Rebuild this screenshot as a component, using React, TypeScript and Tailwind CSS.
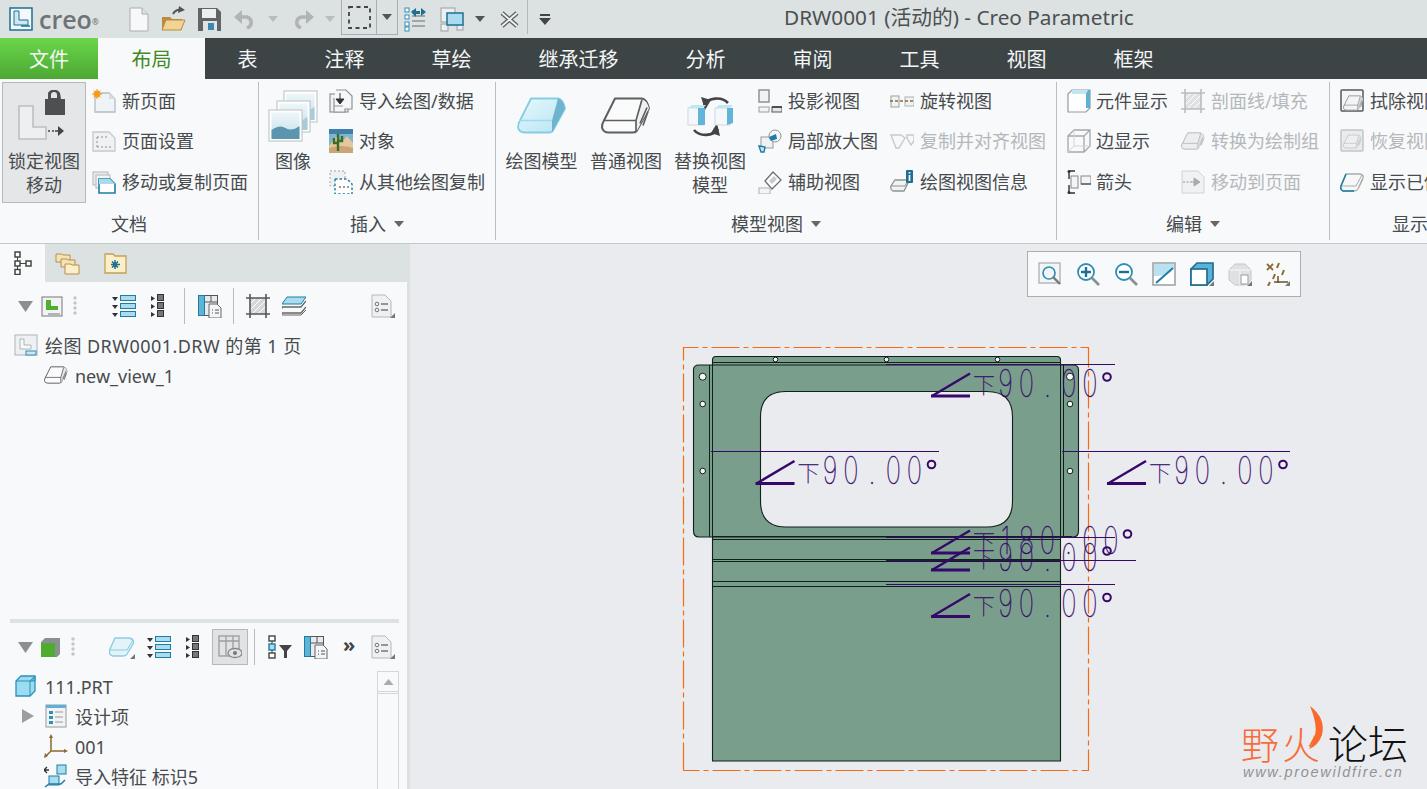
import React from "react";

type P = { w?: number; h?: number; children?: React.ReactNode };
const S = ({ w = 24, h = 24, children }: P) => (
  <svg width={w} height={h} viewBox={`0 0 ${w} ${h}`} className="block shrink-0">{children}</svg>
);
const Tri = ({ c = "#666", w = 10, h = 6 }: { c?: string; w?: number; h?: number }) => (
  <svg width={w} height={h} viewBox="0 0 10 6" preserveAspectRatio="none" className="block shrink-0"><path d="M0 0h10L5 6z" fill={c} /></svg>
);
const Corner = () => <path d="M24 19v5h-5z" fill="#777" />;

const Block = ({ w = 24, h = 18, stroke = "#5b6063", fill = "#f6f7f8", side = "#d8dadb" }: { w?: number; h?: number; stroke?: string; fill?: string; side?: string }) => (
  <svg width={w} height={h} viewBox="0 0 50 36" className="block shrink-0">
    <path d="M14 1H41Q46 2 48 11L36 33Q35 35 32 35H8Q2 35 1 30Q1 26 3 23Z" fill={fill} stroke={stroke} strokeWidth="2" strokeLinejoin="round" />
    <path d="M35 34 35 23 41 2Q46 3 48 11L36 33Z" fill={side} />
    <path d="M2 23H35L41 2M35 23 35 34M39 26 46 10M42 28 47 14" fill="none" stroke={stroke} strokeWidth="1.700" />
  </svg>
);

const ListTree = () => (
  <S w={24} h={24}>
    {[2, 10, 18].map((y) => (
      <g key={y}><path d={`M0 ${y + 1}h6l-3 4z`} fill="#333" /><rect x="8.5" y={y - 0.5} width="15" height="5" fill="#a8dcee" stroke="#1f7da5" /></g>
    ))}
  </S>
);
const DotTree = () => (
  <S w={14} h={24}>
    {[2, 10, 18].map((y) => (
      <g key={y}><path d={`M0 ${y}l4 2.5-4 2.5z`} fill="#333" /><rect x="6.5" y={y - 1.5} width="6" height="6" fill="#777" stroke="#333" /></g>
    ))}
  </S>
);
const TableDoc = () => (
  <S>
    <rect x="0.5" y="1.5" width="19" height="20" fill="#e8eaeb" stroke="#555" />
    <rect x="0.5" y="1.5" width="6" height="20" fill="#5fb3d6" stroke="#1f7da5" />
    <path d="M7 8h12M13 2v6" stroke="#555" />
    <path d="M11 10h8l4 4v10H11z" fill="#f4f5f6" stroke="#666" />
    <path d="M14 16h1m2 0h4M14 19h1m2 0h4" stroke="#555" />
  </S>
);
const Settings = () => (
  <S w={24} h={24}>
    <path d="M1 1h13l6 6v16H1z" fill="#eef0f1" stroke="#b5b9bb" />
    <circle cx="6" cy="10" r="1.8" fill="none" stroke="#777" /><circle cx="6" cy="16" r="1.8" fill="none" stroke="#777" />
    <path d="M10 10h7M10 16h7" stroke="#777" strokeWidth="1.3" />
    <Corner />
  </S>
);
const Dots = () => (
  <S w={6} h={24}>{[4, 9, 14, 19].map((y) => <circle key={y} cx="3" cy={y} r="1.7" fill="#c4c7c9" />)}</S>
);
const Hatch = ({ c = "#555", bg = "#d5d7d8" }: { c?: string; bg?: string }) => (
  <S>
    <rect x="4" y="4" width="16" height="16" fill={bg} />
    <path d="M4 10l6-6M4 16 16 4M6 20 20 6M12 20l8-8" stroke="#fff" strokeWidth="1" />
    <path d="M0 4h24M0 20h24M4 0v24M20 0v24" stroke={c} strokeWidth="1.6" />
  </S>
);

/* ribbon icons */
const NewPage = () => (
  <S><path d="M3 4h14l6 6v13H3z" fill="#eef3f6" stroke="#b6bcbf" strokeWidth="1.3" /><path d="M17 4v6h6" fill="#d8dcde" /><circle cx="5" cy="5" r="3.4" fill="#f7a51e" /><path d="M5 0v10M0 5h10M1.500 1.500l7 7M8.500 1.500l-7 7" stroke="#f2971a" strokeWidth="1" /></S>
);
const PageSetup = () => (
  <S><path d="M1 3h16l6 6v13H1z" fill="#eff1f2" stroke="#c5c9cb" strokeWidth="1.3" /><path d="M5 18h16M5 8v10M5 8h11" stroke="#8c9194" strokeDasharray="2 2" fill="none" /></S>
);
const MovePage = () => (
  <S><rect x="1" y="2" width="15" height="13" fill="#e8eaec" stroke="#b4b8ba" /><rect x="4" y="5" width="14" height="13" fill="#f3f4f5" stroke="#b4b8ba" /><path d="M7 9h11l5 5v9H7z" fill="#fff" stroke="#1f7da5" strokeWidth="1.6" /><path d="M7 9h11l5 5H7z" fill="#a8dcee" /></S>
);
const Lock = () => (
  <svg width="52" height="56" viewBox="0 0 52 56" className="block">
    <path d="M1 16H15V37H28V49H1Z" fill="#edeff0" stroke="#bcc0c2" strokeWidth="1.6" />
    <path d="M30 3a7 7 0 0 1 12 0l1 6h4v16H27V9h3z" fill="#4d4f50" />
    <path d="M33 8V5a3 3 0 0 1 6 0v3z" fill="#e4e6e7" />
    <path d="M30 41h2M34 41h2M37 41h3" stroke="#444" strokeWidth="1.300" />
    <path d="M40 36l6 5-6 5z" fill="#444" />
  </svg>
);
const ImgCard = ({ x, y, hill = "#a9cbd9" }: { x: number; y: number; hill?: string }) => (
  <g>
    <rect x={x} y={y} width="33" height="31" fill="#fff" stroke="#c5c9cb" strokeWidth="1.2" />
    <rect x={x + 2.500} y={y + 2.500} width="28" height="26" fill="url(#sky)" />
    <path d={`M${x + 2.500} ${y + 20}q8-6 14-2t14-2v13h-28z`} fill={hill} />
  </g>
);
const Images = () => (
  <svg width="50" height="52" viewBox="0 0 50 52" className="block">
    <defs><linearGradient id="sky" x1="0" y1="0" x2="0" y2="1"><stop offset="0" stopColor="#eef6f9" /><stop offset="1" stopColor="#c4e0ea" /></linearGradient></defs>
    <ImgCard x={16} y={1} /><ImgCard x={9} y={11} /><ImgCard x={1} y={20} hill="#5b95af" />
  </svg>
);
const ImportDraw = () => (
  <S><rect x="1" y="5" width="18" height="18" fill="#f1f3f4" stroke="#8f9496" strokeWidth="1.2" /><path d="M7 1h10l6 6v13H16v3H5V9" fill="#f6f7f8" stroke="#8f9496" strokeWidth="1.2" /><path d="M11 4v9M7 10l4 5 4-5z" fill="#333" stroke="#333" /><path d="M5 17h9" stroke="#999" /></S>
);
const Cactus = () => (
  <S>
    <rect width="24" height="24" fill="#7fb4cf" /><rect y="0" width="24" height="5" fill="#3f7fa8" />
    <path d="M0 17 7 8l6 5 5-6 6 7v10H0z" fill="#e4c79d" /><path d="M0 19q12-4 24 0v5H0z" fill="#c9a673" />
    <path d="M9 22V5M9 14H5v-5M9 12h4V7" stroke="#3d6b2a" strokeWidth="2.400" fill="none" />
  </S>
);
const CopyDraw = () => (
  <S>
    <rect x="1" y="1" width="15" height="15" fill="#eef0f1" stroke="#a0a5a8" strokeDasharray="2 2" />
    <path d="M6 9h12l5 5v10H6z" fill="#fff" stroke="#1f7da5" strokeWidth="1.400" strokeDasharray="2.500 2" />
    <path d="M10 17h10" stroke="#333" strokeDasharray="2 2" />
  </S>
);
const DrawModel = () => (
  <svg width="50" height="37" viewBox="0 0 50 36" className="block">
    <defs><linearGradient id="bl" x1="0" y1="0" x2="1" y2="1"><stop offset="0" stopColor="#e9f8fc" /><stop offset="1" stopColor="#b5e4f2" /></linearGradient></defs>
    <path d="M14 1H41Q46 2 48 11L36 33Q35 35 32 35H8Q2 35 1 30Q1 26 3 23Z" fill="url(#bl)" stroke="#86cde3" strokeWidth="1.800" strokeLinejoin="round" />
    <path d="M35 35 35 23 41 1Q46 2 48 11L36 33Z" fill="#6eb4cf" />
    <path d="M2 23H35" stroke="#9bdcee" strokeWidth="1.500" />
  </svg>
);
const Replace = () => (
  <svg width="47" height="48" viewBox="0 0 47 48" className="block">
    <path d="M17 13a14 11 0 0 1 24 -2" fill="none" stroke="#444" strokeWidth="2.600" />
    <path d="M14 5 18 18 24 8z" fill="#444" />
    <path d="M31 37a14 11 0 0 1-24 1" fill="none" stroke="#444" strokeWidth="2.600" />
    <path d="M33 44 30 31 24 41z" fill="#444" />
    <rect x="1" y="16" width="15" height="17" fill="#f4f8fa" stroke="#d2d8db" /><path d="M11 16h7v17h-7z" fill="#62b5d6" /><path d="M1 16h15l3-3H5z" fill="#bfe6f3" />
    <rect x="28" y="16" width="15" height="17" fill="#f4f8fa" stroke="#d2d8db" /><path d="M40 16h6v15l-6 2z" fill="#62b5d6" /><path d="M28 16h15l3-3H32z" fill="#bfe6f3" />
  </svg>
);
const Proj = () => (
  <S><rect x="1" y="1" width="10" height="12" fill="#f0f2f3" stroke="#7e8487" strokeWidth="1.300" /><rect x="1" y="18" width="10" height="5" fill="#f3f4f5" stroke="#9ba0a3" /><rect x="14" y="18" width="10" height="5" fill="#e4e6e7" stroke="#555" /><path d="M14 18h10" stroke="#333" strokeWidth="1.500" /></S>
);
const Detail = () => (
  <S><rect x="3" y="8" width="12" height="11" fill="#f0f1f2" stroke="#999" /><circle cx="17" cy="7" r="6" fill="#f4f5f6" stroke="#8f9496" /><path d="M11 8l7-3 1 5-6 2z" fill="#1f7da5" /><path d="M1 17l6 1 -1 5-3 0z" fill="#c9e6f2" stroke="#1f7da5" strokeWidth="1.400" /></S>
);
const Aux = () => (
  <S><path d="M7 11 15 2l8 8-9 9z" fill="#fff" stroke="#6c7174" strokeWidth="1.300" /><path d="M11 11l5-5 3 3-5 5z" fill="#c9ccce" /><rect x="1" y="18" width="11" height="6" fill="#f3f4f5" stroke="#aeb2b4" /></S>
);
const Rotate = () => (
  <S h={14}><rect x="1" y="2" width="8" height="11" fill="#f1f2f3" stroke="#9ba0a3" /><rect x="15" y="3" width="9" height="9" fill="#f1f2f3" stroke="#aeb2b4" /><path d="M0 7h24" stroke="#8a6a30" strokeWidth="1.300" strokeDasharray="3 2" /></S>
);
const CopyAlign = () => (
  <S h={16}><path d="M1 2h10l4 3-6 10H6z" fill="#f7f8f9" stroke="#c6cacc" strokeWidth="1.400" /><path d="M17 2h7v6l-3 4-4-7z" fill="#f7f8f9" stroke="#c6cacc" strokeWidth="1.400" /></S>
);
const ViewInfo = () => (
  <S><path d="M5 10h13v3l-4 8H3q-3-1-2-5z" fill="#f0f2f3" stroke="#8f9496" strokeWidth="1.300" /><path d="M1 16h14l3-6" fill="none" stroke="#8f9496" /><rect x="16" y="0" width="7" height="13" rx="1" fill="#1f6f92" /><path d="M19.500 2v1.500M19.500 5v6" stroke="#fff" strokeWidth="1.700" /></S>
);
const CompDisp = () => (
  <S><path d="M1 5 5 1h18v18l-4 4H1z" fill="#fff" stroke="#999" strokeWidth="1.200" /><path d="M5 1h18v18h-4V5H5z" fill="#5db1d4" /><path d="M5 5h14v14H5z" fill="#fff" /><path d="M5 1h16l-2 4H5z" fill="#bfe6f3" /></S>
);
const EdgeDisp = () => (
  <S><path d="M1 7 7 1h16v16l-6 6H1zM1 7h16v16M17 7l6-6" fill="#f8f9fa" stroke="#a3a8ab" strokeWidth="1.300" /><path d="M1 23l6-6h16M7 1v16" fill="none" stroke="#d2d5d7" /></S>
);
const Arrows = () => (
  <S><path d="M2 1h6M2 1v8M2 15v8M2 23h6" stroke="#333" strokeWidth="1.400" fill="none" /><circle cx="2" cy="1.500" r="1.500" fill="#333" /><circle cx="2" cy="22.500" r="1.500" fill="#333" /><rect x="4" y="6" width="7" height="12" fill="#f3f4f5" stroke="#888" /><rect x="14" y="6" width="10" height="8" fill="#f3f4f5" stroke="#888" /><path d="M14 14h10" stroke="#333" /></S>
);
const MoveTo = () => (
  <S><path d="M1 1h16l6 6v16H1z" fill="#eff1f2" stroke="#d0d3d5" /><path d="M2 12h10" stroke="#b0b4b6" strokeDasharray="2 1.500" strokeWidth="1.500" /><path d="M11 12h6M13 8l6 4-6 4z" fill="#a8acae" stroke="#a8acae" /></S>
);
const Erase = () => (
  <S><rect x="1" y="1" width="22" height="21" rx="1" fill="#f4f5f6" stroke="#55595c" strokeWidth="1.500" /><foreignObject x="3" y="6" width="21" height="17"><Block w={21} h={16} stroke="#8b8f92" fill="#f3f4f5" /></foreignObject></S>
);
const Restore = () => (
  <S><rect x="1" y="1" width="22" height="21" rx="1" fill="#e9ebec" stroke="#c2c6c8" strokeWidth="1.500" /><foreignObject x="3" y="5" width="20" height="16" opacity=".55"><Block w={19} h={15} stroke="#9a9ea1" fill="#f3f4f5" /></foreignObject></S>
);
const ShowMod = () => (
  <S h={20}><path d="M6 2H20Q24 3 23 6L18 17Q17 19 14 19H3Q0 18 1 14Z" fill="#f6f7f8" stroke="#a8acae" strokeWidth="1.300" /><path d="M6 2 1 14Q0 18 3 19H14" fill="none" stroke="#1f7da5" strokeWidth="1.500" /><path d="M2 14H16L22 3M19 15 23 7" fill="none" stroke="#a8acae" /></S>
);

const Row = ({ icon, label, off, gap = "gap-[6px]" }: { icon: React.ReactNode; label: string; off?: boolean; gap?: string }) => (
  <div className={`flex h-[40.5px] items-center whitespace-nowrap pb-[3px] ${gap} ${off ? "text-[#b4b8ba]" : ""}`}>
    <div className="flex w-[24px] justify-center">{icon}</div>
    <span>{label}</span>
  </div>
);
const Big = ({ icon, lines, w }: { icon: React.ReactNode; lines: string[]; w: string }) => (
  <div className={`flex flex-col items-center ${w}`}>
    <div className="flex h-[67px] items-center justify-center">{icon}</div>
    {lines.map((l) => <div key={l} className="whitespace-nowrap leading-[24px]">{l}</div>)}
  </div>
);
const Section = ({ w, label, arrow, children }: { w: string; label: string; arrow?: boolean; children: React.ReactNode }) => (
  <section className={`flex h-[158px] shrink-0 flex-col border-r border-[#b9bfc2] ${w}`}>
    <div className="flex h-[125px] items-start">{children}</div>
    <div className="flex h-[33px] items-center justify-center gap-[8px] whitespace-nowrap">
      <span>{label}</span>{arrow && <Tri />}
    </div>
  </section>
);

const tabs = ["表", "注释", "草绘", "继承迁移", "分析", "审阅", "工具", "视图", "框架"];

/* ---- drawing ---- */
const PURPLE = "#36086a";
const Dim = ({ dx, dy, one }: { dx: number; dy: number; one?: boolean }) => {
  const sx = 0.68;
  const chars = one ? "180.00" : "90.00";
  const pos = one ? [1005.5, 1026.5, 1047.5, 1068.5, 1090, 1111] : [1005.5, 1026.5, 1047.5, 1069, 1090];
  return (
    <g transform={`translate(${dx} ${dy})`} fill={PURPLE}>
      <path d="M931 396H970" stroke={PURPLE} strokeWidth="3" />
      <path d="M932 396 970 373.500" stroke={PURPLE} strokeWidth="2.400" />
      <text x={984} y={393} textAnchor="middle" fontSize="22" fontWeight="100" stroke={PURPLE} strokeWidth="0.25" fontFamily="'Noto Sans CJK SC',sans-serif">下</text>
      <g transform={`scale(${sx} 1)`}>
        <text x={pos.map((p) => p / sx).join(" ")} y={397} textAnchor="middle" fontSize="38" fontWeight="100" stroke={PURPLE} strokeWidth="0.45" fontFamily="Inter,sans-serif">{chars}</text>
      </g>
      <circle cx={one ? 1127.5 : 1107} cy={377} r={3.8} fill="none" stroke={PURPLE} strokeWidth="2" />
    </g>
  );
};

const Drawing = () => (
  <svg viewBox="410 244 1017 545" width="1017" height="545" className="block">
    <path d="M683.500 770.500V347.500H1088.500V770.500H683.500" fill="none" stroke="#fb6a12" strokeWidth="1.200" strokeDasharray="28 4 5 4" />
    <g stroke="#10201a" strokeWidth="1.100" fill="#7a9e8c">
      <path d="M712.500 761V360Q712.500 356.500 716 356.500H1057Q1060.500 356.500 1060.500 360V761Z" />
      <path d="M699 365H1073Q1078.500 365 1078.500 370V531Q1078.500 537 1073 537H699Q693.500 537 693.500 531V370Q693.500 365 699 365Z" />
      <path d="M786 391.500H987Q1012.500 391.500 1012.500 417V501Q1012.500 527 987 527H786Q760.500 527 760.500 501V417Q760.500 391.500 786 391.500Z" fill="#e9ebef" />
    </g>
    <g stroke="#10201a" strokeWidth="1" fill="none" shapeRendering="crispEdges">
      <path d="M709.500 365V537M712.500 365V537M1060.500 365V537M1063.500 365V537M712.500 362.500H1060.500M712.500 536.500H1072M712.500 539.500H1060.500M712.500 559.500H1060.500M712.500 561.500H1060.500M712.500 581.500H1060.500M712.500 586.500H1060.500" />
    </g>
    <g fill="#f4f5f6" stroke="#10201a" strokeWidth="1">
      {[[702.7, 376.7, 3.500], [702.7, 404, 2.800], [702.7, 471, 2.800], [1070, 376.7, 3.500], [1070, 404, 2.800], [1070, 471, 2.800], [775.5, 359.5, 2.300], [886.5, 359.5, 2.300], [997.5, 359.5, 2.300]].map(([x, y, r]) => (
        <circle key={`${x}${y}`} cx={x} cy={y} r={r} />
      ))}
    </g>
    <g stroke={PURPLE} strokeWidth="1" shapeRendering="crispEdges">
      <path d="M886 364.500H1115M711 451.500H939M1062 451.500H1290M886 537.500H1115M886 560.500H1136M886 584.500H1115" />
    </g>
    <Dim dx={0} dy={0} />
    <Dim dx={-175.5} dy={87.500} />
    <Dim dx={176} dy={87.500} />
    <Dim dx={0} dy={157} one />
    <Dim dx={0} dy={174} />
    <Dim dx={0} dy={220.500} />
    <g fontFamily="'Noto Sans CJK SC',sans-serif" fontSize="38" fontWeight="300">
      <text x="1241" y="759" fill="#fa6b3a">野</text>
      <text x="1282" y="759" fill="#fa6b3a">火</text>
      <text x="1328" y="759" fontSize="40" fill="#111">论坛</text>
    </g>
    <path d="M1310 706Q1326 718 1322 735Q1318 746 1309 749Q1318 735 1315 722Q1313 713 1310 706Z" fill="#fb6a2c" />
    <text x="1243" y="777" fontFamily="'Liberation Sans',sans-serif" fontStyle="italic" fontSize="14.500" letterSpacing="1.700" fill="#8f9395">www.proewildfire.cn</text>
  </svg>
);

export default function App() {
  return (
    <div className="relative flex h-[789px] w-[1427px] flex-col overflow-hidden bg-[#e9ebef] font-['Noto_Sans','Noto_Sans_CJK_SC',sans-serif] text-[18px] leading-[24px] text-[#484b4d]">
      {/* title bar */}
      <header className="flex h-[38px] shrink-0 items-center bg-[#dce1e1]">
        <div className="ml-[9px]">
          <S h={24}><rect x="1" y="1" width="22" height="22" fill="#f4f8fa" stroke="#1f6f92" strokeWidth="1.500" /><path d="M5 4h5v9h9v5H5z" fill="#cfe7f1" stroke="#1f6f92" /><path d="M12 19h9" stroke="#1f6f92" strokeWidth="1.500" /></S>
        </div>
        <span className="ml-[6px] w-[61px] shrink-0 whitespace-nowrap font-['Open_Sans',sans-serif] text-[25px] font-semibold leading-[30px] text-[#6f7376]">creo<sup className="text-[8px]">®</sup></span>
        <div className="ml-[29px]"><S w={20} h={25}><path d="M1 1h12l6 6v17H1z" fill="#f6f8f9" stroke="#a8aeb1" /><path d="M13 1v6h6" fill="#dfe3e5" stroke="#a8aeb1" /></S></div>
        <div className="ml-[12px]"><S w={25} h={26}><path d="M1 11h8l2 2h10v11H1z" fill="#b98c3f" /><path d="M1 24 5 14h19l-4 10z" fill="#f0d494" stroke="#b98c3f" /><path d="M12 8q3-5 8-4" stroke="#555" strokeWidth="2" fill="none" /><path d="M18 0l6 4-7 3z" fill="#555" /></S></div>
        <div className="ml-[12px]"><S w={23} h={25}><path d="M0 1h19l4 4v19H0z" fill="#5f6466" /><rect x="4" y="2" width="14" height="9" fill="#eceeef" /><rect x="5" y="14" width="14" height="10" fill="#dfe3e5" /><rect x="10" y="16" width="6" height="7" fill="#3a89ad" /></S></div>
        <div className="ml-[13px]"><S w={23} h={20}><path d="M3 8H13a7 6 0 0 1 0 11" fill="none" stroke="#b0b4b6" strokeWidth="3.600" /><path d="M8 1v14L0 8z" fill="#b0b4b6" /></S></div>
        <div className="ml-[11px]"><Tri c="#b9bdbf" /></div>
        <div className="ml-[13px]"><S w={23} h={20}><path d="M20 8H10a7 6 0 0 0 0 11" fill="none" stroke="#b0b4b6" strokeWidth="3.600" /><path d="M15 1v14l8-7z" fill="#b0b4b6" /></S></div>
        <div className="ml-[11px]"><Tri c="#b9bdbf" /></div>
        <div className="ml-[6px] flex h-[35px] w-[57px] shrink-0 self-start border-x border-b border-[#a9aeb0]">
          <div className="flex w-[35px] items-center justify-center border-r border-[#a9aeb0]"><svg width="23" height="23" viewBox="0 0 23 23"><rect x="1" y="1" width="21" height="21" fill="none" stroke="#444" strokeWidth="1.800" strokeDasharray="4 3.500" /></svg></div>
          <div className="flex flex-1 items-center justify-center"><Tri c="#555" /></div>
        </div>
        <div className="ml-[6px]"><S w={23} h={25}><path d="M8 4h4M8 9h13M8 14h13M8 19h13" stroke="#8d9295" strokeWidth="1.300" /><g fill="#fff" stroke="#2f8fb5"><rect x="1" y="1" width="4" height="4" /><rect x="1" y="8" width="4" height="4" /><rect x="1" y="15" width="4" height="4" /><rect x="1" y="20" width="4" height="4" /></g><path d="M7 5l5-4v3h4v3h-4v3zM22 5l-5-4v8z" fill="#1f6f92" /></S></div>
        <div className="ml-[13px]"><S w={24} h={25}><rect x="1" y="1" width="14" height="14" fill="#eceeef" stroke="#9a9fa2" /><rect x="1" y="17" width="7" height="7" fill="#eceeef" stroke="#9a9fa2" /><rect x="17" y="17" width="6" height="6" fill="#eceeef" stroke="#9a9fa2" /><rect x="7" y="6" width="16" height="12" fill="#a8dcee" stroke="#1f6f92" strokeWidth="1.500" /></S></div>
        <div className="ml-[11px]"><Tri c="#555" /></div>
        <div className="ml-[15px]"><S w={19} h={17}><path d="M2 2l15 13M17 2 2 15" stroke="#5f6466" strokeWidth="4.500" /><path d="M2 2l15 13M17 2 2 15" stroke="#f0f1f2" strokeWidth="1.800" /></S></div>
        <div className="ml-[8px] h-[34px] w-px self-start bg-[#b3b8ba]" />
        <div className="ml-[11px] flex flex-col items-center gap-[2px]"><div className="h-[2px] w-[10px] bg-[#444]" /><Tri c="#444" w={12} h={7} /></div>
        <span className="ml-[233px] whitespace-nowrap pb-[4px] text-[20.750px] text-[#4c5052]">DRW0001 (活动的) - Creo Parametric</span>
      </header>

      {/* tabs */}
      <nav className="flex h-[41px] shrink-0 items-center bg-[#3c4446] text-[20px] text-[#f4f5f5]">
        <div className="flex h-full w-[98px] items-center justify-center bg-gradient-to-b from-[#6ad64b] to-[#4ca832] pt-[2px]">文件</div>
        <div className="flex h-full w-[107px] items-center justify-center bg-[#f7f9fb] pt-[2px] text-[#3f8a22]">布局</div>
        <div className="-ml-[1px] flex h-full items-center pt-[2px]">
          {tabs.map((t) => <div key={t} className="whitespace-nowrap px-[33.500px]">{t}</div>)}
        </div>
      </nav>

      {/* ribbon */}
      <div className="flex h-[165px] shrink-0 overflow-hidden border-b border-[#c3c8ca] bg-[#f7f9fb] pt-[3px]">
        <Section w="w-[259px]" label="文档">
          <div className="ml-[2px] flex h-[121px] w-[84px] flex-col items-center border border-[#b4b9bb] bg-[#e4e6e7]">
            <div className="flex h-[66px] w-full items-center justify-center pt-[4px]"><Lock /></div>
            <div className="leading-[24px]">锁定视图</div>
            <div className="leading-[24px]">移动</div>
          </div>
          <div className="ml-[6px]">
            <Row gap="gap-[6px]" icon={<NewPage />} label="新页面" />
            <Row icon={<PageSetup />} label="页面设置" />
            <Row icon={<MovePage />} label="移动或复制页面" />
          </div>
        </Section>
        <Section w="w-[237px]" label="插入" arrow>
          <Big w="w-[68px]" icon={<Images />} lines={["图像"]} />
          <div className="ml-[2px]">
            <Row icon={<ImportDraw />} label="导入绘图/数据" />
            <Row icon={<Cactus />} label="对象" />
            <Row icon={<CopyDraw />} label="从其他绘图复制" />
          </div>
        </Section>
        <Section w="w-[561px]" label="模型视图" arrow>
          <div className="ml-[3px] flex">
            <Big w="w-[85px]" icon={<DrawModel />} lines={["绘图模型"]} />
            <Big w="w-[84px]" icon={<Block w={50} h={37} stroke="#5b6063" fill="#fbfbfc" side="#f0f1f2" />} lines={["普通视图"]} />
            <Big w="w-[84px]" icon={<Replace />} lines={["替换视图", "模型"]} />
          </div>
          <div className="ml-[6px] w-[132px]">
            <Row icon={<Proj />} label="投影视图" />
            <Row icon={<Detail />} label="局部放大图" />
            <Row icon={<Aux />} label="辅助视图" />
          </div>
          <div>
            <Row icon={<Rotate />} label="旋转视图" />
            <Row off icon={<CopyAlign />} label="复制并对齐视图" />
            <Row icon={<ViewInfo />} label="绘图视图信息" />
          </div>
        </Section>
        <Section w="w-[273px]" label="编辑" arrow>
          <div className="ml-[10px] w-[114px]">
            <Row gap="gap-[5px]" icon={<CompDisp />} label="元件显示" />
            <Row gap="gap-[5px]" icon={<EdgeDisp />} label="边显示" />
            <Row gap="gap-[5px]" icon={<Arrows />} label="箭头" />
          </div>
          <div>
            <Row off icon={<Hatch c="#b9bdbf" bg="#dfe1e2" />} label="剖面线/填充" />
            <Row off icon={<Block w={24} h={18} stroke="#b4b8ba" fill="#eceeef" side="#dfe1e2" />} label="转换为绘制组" />
            <Row off icon={<MoveTo />} label="移动到页面" />
          </div>
        </Section>
        <Section w="w-[178px] border-r-0" label="显示" arrow>
          <div className="ml-[10px]">
            <Row icon={<Erase />} label="拭除视图" />
            <Row off icon={<Restore />} label="恢复视图" />
            <Row icon={<ShowMod />} label="显示已修改视图" />
          </div>
        </Section>
      </div>

      {/* body */}
      <div className="flex min-h-0 flex-1">
        <aside className="flex w-[407px] shrink-0 flex-col overflow-hidden bg-[#f7f9fb]">
          <div className="flex h-[38px] shrink-0 items-center bg-[#dce1e1]">
            <div className="flex h-full w-[45px] items-center justify-center bg-[#f7f9fb]">
              <svg width="18" height="24" viewBox="0 0 18 24"><g fill="#fff" stroke="#444" strokeWidth="1.500"><rect x="1" y="1" width="5" height="5" /><rect x="1" y="10" width="5" height="5" /><rect x="1" y="18.500" width="5" height="5" /><rect x="12" y="10" width="5" height="5" /></g><path d="M3.500 6v4M3.500 15v4M6 12.500h6" stroke="#444" /></svg>
            </div>
            <div className="ml-[10px]"><svg width="25" height="24" viewBox="0 0 25 24"><g fill="#f6e3b5" stroke="#b58f4b"><path d="M1 3h6l1 1h7v7H1z" /><path d="M6 8h6l1 1h7v7H6z" /><path d="M10 13h6l1 1h7v9H10z" fill="#fbeecb" /></g></svg></div>
            <div className="ml-[24px]"><svg width="23" height="22" viewBox="0 0 23 22"><path d="M1 4V2h8l2 2h11v17H1z" fill="#fbefc9" stroke="#c39f5c" strokeWidth="1.300" /><path d="M11 8v9M7 12.500h9M8 9.500l6 6M14 9.500l-6 6" stroke="#1f6f92" strokeWidth="1.500" /></svg></div>
          </div>
          <div className="flex h-[48px] shrink-0 items-center">
            <div className="ml-[18px]"><Tri c="#8b8f92" w={15} h={11} /></div>
            <div className="ml-[8px]"><S w={22} h={24}><rect x="1" y="3" width="20" height="19" fill="#f2f3f4" stroke="#777" /><path d="M5 6h5v6h7v4H5z" fill="#4caf2f" /><path d="M7 20h12" stroke="#777" /></S></div>
            <div className="ml-[9px]"><Dots /></div>
            <div className="ml-[34px]"><ListTree /></div>
            <div className="ml-[15px]"><DotTree /></div>
            <div className="ml-[19px] h-[36px] w-px bg-[#b8bcbf]" />
            <div className="ml-[13px]"><TableDoc /></div>
            <div className="ml-[11px] h-[36px] w-px bg-[#b8bcbf]" />
            <div className="ml-[12px]"><Hatch /></div>
            <div className="ml-[12px]"><S><path d="M5 3h19l-5 7H0z" fill="#a8dcee" stroke="#1f7da5" /><path d="M0 13h19l5-6M0 19h19l5-6" fill="none" stroke="#666" strokeWidth="1.300" /><path d="M0 13v2M0 19v2h19l5-5" fill="none" stroke="#666" /></S></div>
            <div className="ml-[65px]"><Settings /></div>
          </div>
          <div className="flex h-[30px] shrink-0 items-center pl-[14px] whitespace-nowrap">
            <S w={24} h={24}><rect x="1" y="2" width="22" height="20" fill="#eef1f3" stroke="#aeb4b7" /><path d="M6 6h4v6h7v4H6z" fill="#f8f9fa" stroke="#aeb4b7" /><rect x="12" y="18" width="10" height="4" fill="#cde6f1" stroke="#2f8fb5" /></S>
            <span className="ml-[7px] pt-[2px] tracking-[0.45px]">绘图 DRW0001.DRW 的第 1 页</span>
          </div>
          <div className="flex h-[30px] shrink-0 items-center pl-[44px]">
            <Block w={24} h={18} stroke="#5b6063" fill="#fbfbfc" side="#e4e5e6" />
            <span className="ml-[7px] pt-[2px]">new_view_1</span>
          </div>
          <div className="h-[229px] shrink-0" />
          <div className="mx-[10px] h-[4px] w-[389px] shrink-0 bg-[#dce1e1]" />
          <div className="flex h-[48px] shrink-0 items-center">
            <div className="ml-[18px]"><Tri c="#8b8f92" w={15} h={11} /></div>
            <div className="ml-[8px]"><S w={19} h={22}><path d="M0 6l4-4h15v16l-3 3H0z" fill="#8b8f92" /><rect x="0" y="7" width="14" height="14" fill="#4ead2e" /></S></div>
            <div className="ml-[10px]"><Dots /></div>
            <div className="ml-[33px]"><S w={26} h={24}><path d="M6 3H20Q26 4 24 9L18 19Q17 21 14 21H4Q-1 20 1 14Z" fill="#e2f3f9" stroke="#8ccde3" strokeWidth="1.400" /><path d="M1 15H18L24 5" fill="none" stroke="#8ccde3" /><path d="M26 19v5h-5z" fill="#777" /></S></div>
            <div className="ml-[12px]"><ListTree /></div>
            <div className="ml-[15px]"><DotTree /></div>
            <div className="ml-[12px] flex h-[36px] w-[36px] items-center justify-center border border-[#b4b9bb] bg-[#e0e2e3]">
              <S><rect x="1" y="1" width="20" height="20" fill="none" stroke="#9a9ea1" strokeWidth="1.300" /><path d="M1 6h20M8 1v20M15 1v20" stroke="#9a9ea1" strokeWidth="1.300" /><ellipse cx="17" cy="18" rx="7" ry="4.500" fill="#e0e2e3" stroke="#888" strokeWidth="1.300" /><circle cx="17" cy="18" r="2" fill="#777" /></S>
            </div>
            <div className="ml-[6px] h-[36px] w-px bg-[#b8bcbf]" />
            <div className="ml-[13px]"><S w={24} h={24}><g fill="#fff" stroke="#444" strokeWidth="1.400"><rect x="1" y="1" width="6" height="5" /><rect x="1" y="18" width="6" height="5" /></g><rect x="1" y="9" width="6" height="6" fill="#a8dcee" stroke="#1f7da5" strokeWidth="1.400" /><path d="M4 6v3M4 15v3" stroke="#444" /><path d="M11 10h13l-5 6v7h-3v-7z" fill="#444" /></S></div>
            <div className="ml-[12px]"><TableDoc /></div>
            <div className="ml-[15px] w-[12px] pb-[4px] text-center text-[20px] font-bold leading-none text-[#444]">»</div>
            <div className="ml-[16px]"><Settings /></div>
          </div>
          <div className="flex min-h-0 flex-1">
            <div className="min-w-0 flex-1">
              <div className="flex h-[30px] items-center pl-[15px]">
                <S w={21} h={22}><path d="M1 6l5-5h14v15l-5 5H1z" fill="#9adcf2" stroke="#2f8fb5" strokeWidth="1.300" /><path d="M15 6h5V1l-5 5v15" fill="#5db1d4" stroke="#2f8fb5" /><path d="M1 6h14" stroke="#2f8fb5" /></S>
                <span className="ml-[9px] pt-[2px]">111.PRT</span>
              </div>
              <div className="flex h-[30px] items-center pl-[22px]">
                <svg width="12" height="14" viewBox="0 0 12 14"><path d="M0 0l12 7-12 7z" fill="#9a9ea1" /></svg>
                <div className="ml-[11px]"><S w={22} h={24}><rect x="1" y="1" width="20" height="22" fill="#f1f3f4" stroke="#999" /><path d="M1 1h20v3H1z" fill="#5db1d4" /><g fill="#2f8fb5"><rect x="4" y="7" width="4" height="3" /><rect x="4" y="12" width="4" height="3" /><rect x="4" y="17" width="4" height="3" /></g><path d="M10 8h8M10 13h8M10 18h8" stroke="#999" /></S></div>
                <span className="ml-[8px] pt-[2px]">设计项</span>
              </div>
              <div className="flex h-[30px] items-center pl-[44px]">
                <S><path d="M7 2v15L1 23M7 17h15" stroke="#8c6a33" strokeWidth="1.500" fill="none" /><path d="M7 0l2 4H5zM24 17l-4-2v4zM0 24l1-5 3 3z" fill="#8c6a33" /></S>
                <span className="ml-[7px] pt-[2px]">001</span>
              </div>
              <div className="flex h-[30px] items-center pl-[44px] whitespace-nowrap">
                <S><path d="M0 6h5M3 3l-3 3 3 3" stroke="#333" fill="none" strokeWidth="1.300" /><rect x="13" y="1" width="9" height="9" fill="#a8dcee" stroke="#1f7da5" /><rect x="5" y="12" width="10" height="9" fill="#a8dcee" stroke="#1f7da5" /><path d="M1 23l4-3h12l4-4" stroke="#1f7da5" strokeWidth="1.500" fill="none" /></S>
                <span className="ml-[7px] pt-[2px]">导入特征 标识5</span>
              </div>
            </div>
            <div className="mr-[8px] flex w-[22px] flex-col border-x border-[#d5d8da]">
              <div className="flex h-[21px] items-center justify-center border-y border-[#d5d8da]"><svg width="11" height="6" viewBox="0 0 10 6"><path d="M0 6h10L5 0z" fill="#a8acae" /></svg></div>
              <div className="mt-[1px] flex-1 border-t border-[#d5d8da]" />
            </div>
          </div>
        </aside>
        <div className="w-[3px] shrink-0 bg-[#dce1e1]" />
        <main className="relative min-w-0 flex-1">
          <Drawing />
          <div className="absolute left-[617px] top-[7px] flex h-[46px] w-[274px] items-center border border-[#a9aeb0] bg-[#f7f9fb]">
            <div className="ml-[10px]"><S><rect x="1" y="1" width="21" height="20" fill="#f4f5f6" stroke="#aab0b3" strokeWidth="1.300" /><circle cx="11" cy="11" r="6" fill="none" stroke="#2f8fb5" strokeWidth="1.700" /><path d="M15 15l7 7" stroke="#777" strokeWidth="2.400" /></S></div>
            <div className="ml-[14px]"><S><circle cx="10" cy="10" r="8" fill="#fff" stroke="#2f8fb5" strokeWidth="1.800" /><path d="M10 5v10M5 10h10" stroke="#1f6f92" strokeWidth="2.400" /><path d="M16 16l7 7" stroke="#8a8e91" strokeWidth="2.600" /></S></div>
            <div className="ml-[14px]"><S><circle cx="10" cy="10" r="8" fill="#fff" stroke="#2f8fb5" strokeWidth="1.800" /><path d="M5 10h10" stroke="#1f6f92" strokeWidth="2.400" /><path d="M16 16l7 7" stroke="#8a8e91" strokeWidth="2.600" /></S></div>
            <div className="ml-[14px]"><S><rect x="1" y="1" width="22" height="22" fill="#fff" stroke="#9a9ea1" strokeWidth="1.500" /><path d="M2 2h20v4Q16 14 6 14H2z" fill="#b9e2f0" /><path d="M4 21 21 6" stroke="#1f7da5" strokeWidth="2" /></S></div>
            <div className="ml-[14px]"><S><path d="M1 7 7 1h16v16l-6 6H1z" fill="#5db1d4" stroke="#1f6f92" strokeWidth="1.700" /><rect x="1" y="7" width="16" height="16" fill="#fff" stroke="#1f6f92" strokeWidth="1.700" /><Corner /></S></div>
            <div className="ml-[14px]"><S><path d="M1 8l6-6h10l6 6v10l-6 5H7l-6-5z" fill="#dfe2e3" stroke="#c3c6c8" /><path d="M1 8h11l11 0M12 8v15" stroke="#f6f7f8" /><rect x="13" y="13" width="7" height="9" fill="#fff" stroke="#999" /><Corner /></S></div>
            <div className="ml-[14px]"><S><path d="M1 2l6 6M7 2 1 8" stroke="#8c6a33" strokeWidth="1.800" /><path d="M13 1l-2 5M9 12l-2 5M4 20l-2 4M18 8l-2 5" stroke="#8c6a33" strokeWidth="2" /><path d="M12 21v-7M8 20h14" stroke="#6b5226" strokeWidth="1.500" /><Corner /></S></div>
          </div>
        </main>
      </div>
    </div>
  );
}
